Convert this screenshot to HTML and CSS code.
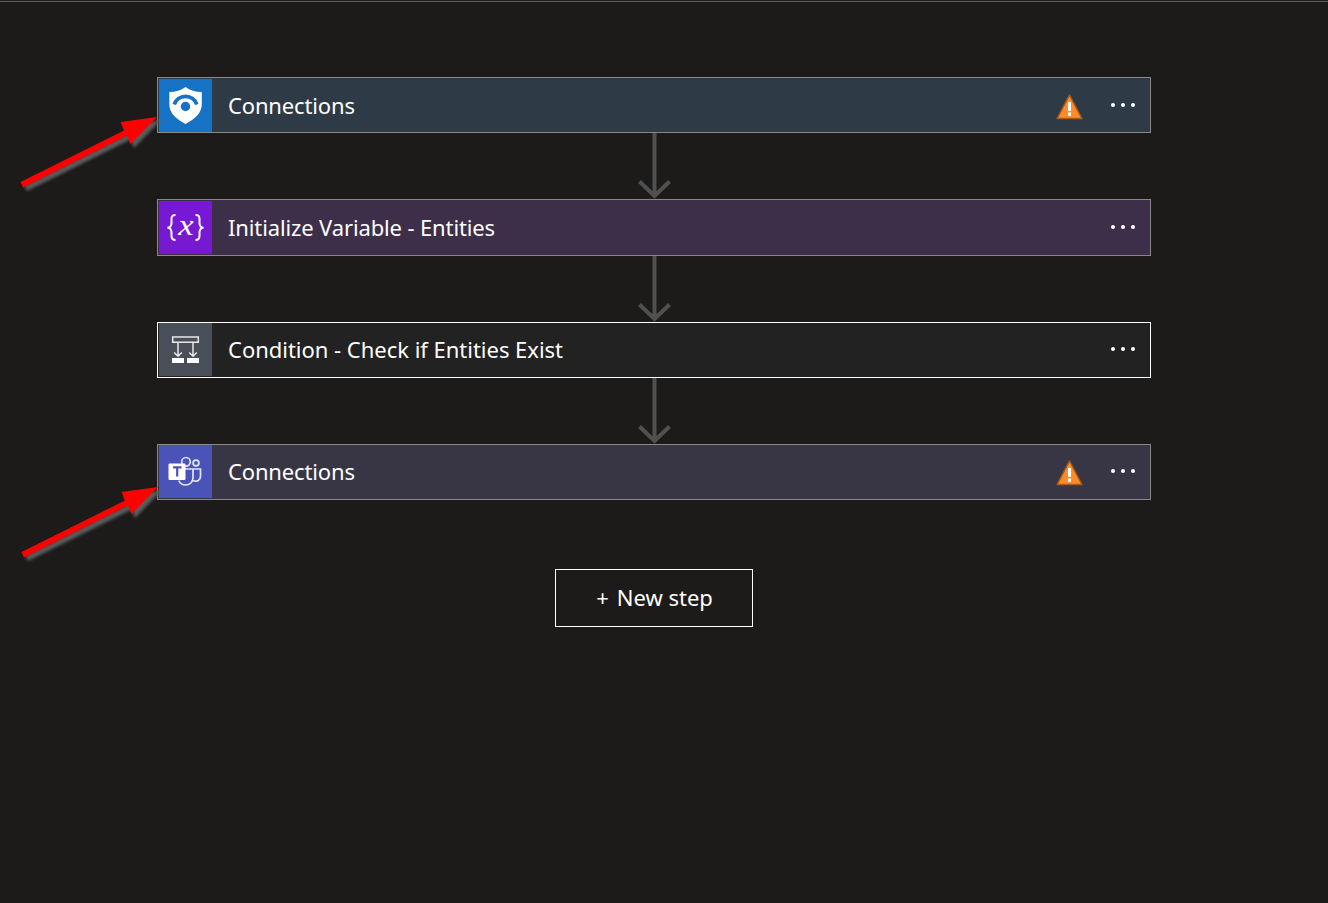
FILE: index.html
```html
<!DOCTYPE html>
<html lang="en">
<head>
<meta charset="utf-8">
<title>Logic app designer</title>
<link rel="stylesheet" href="styles.css">
</head>
<body>
<main class="designer">
  <div class="flow">
    <section class="card sentinel">
      <div class="icon"><svg width="53" height="53" viewBox="0 0 53 53"><path d="M26.500 8C22 11.500 16.500 13 10.300 13V25C10.300 34 17 40 26.500 45C36 40 42.800 34 42.800 25V13C36.500 13 31 11.500 26.500 8Z" fill="#fff"/><path d="M15.200 25.500A11.900 11.900 0 0 1 37.800 25.500" fill="none" stroke="#1672c4" stroke-width="3.800"/><circle cx="26.500" cy="27.500" r="4.700" fill="#1672c4"/></svg></div>
      <span class="title">Connections</span>
      <svg class="warning" width="28" height="28" viewBox="0 0 28 28"><path d="M14.500 2L26.800 25.500H2.200Z" fill="#ff8c28" stroke="#aa5a14" stroke-width="1.500" stroke-linejoin="round"/><path d="M13 9h3v9h-3zM13 19.500h3v3.200h-3z" fill="#fff"/></svg>
      <span class="more"><i></i><i></i><i></i></span>
    </section>
    <div class="link"><svg width="34" height="66" viewBox="0 0 34 66"><path d="M17.500 0V64M2.500 48.500L17.500 63L32.500 48.500" /></svg></div>
    <section class="card variable">
      <div class="icon"><svg width="53" height="53" viewBox="0 0 53 53" fill="none" stroke="#fff" stroke-width="2"><path d="M16.500 14C13 14 12.500 15.500 12.500 18V22C12.500 25 11.500 26.500 8.500 26.700C11.500 27 12.500 28.500 12.500 31.500V35C12.500 38 13.500 39 16.500 39M36.500 14C40 14 40.500 15.500 40.500 18V22C40.500 25 41.500 26.500 44.500 26.700C41.500 27 40.500 28.500 40.500 31.500V35C40.500 38 39.500 39 36.500 39"/><text class="variable-glyph" transform="translate(26.800 33.500) scale(1.150 1)" text-anchor="middle">x</text></svg></div>
      <span class="title">Initialize Variable - Entities</span>
      <span class="more"><i></i><i></i><i></i></span>
    </section>
    <div class="link"><svg width="34" height="66" viewBox="0 0 34 66"><path d="M17.500 0V64M2.500 48.500L17.500 63L32.500 48.500" /></svg></div>
    <section class="card condition">
      <div class="icon"><svg width="53" height="53" viewBox="0 0 53 53" fill="none" stroke="#e8e8e8" stroke-width="1.500"><path d="M13.700 13.900H39.300V19.200H13.700Z"/><path d="M19 19.500V33M15.200 29.500L19 33.300L22.800 29.500M34 19.500V33M30.200 29.500L34 33.300L37.800 29.500"/><path d="M13 35H25V40H13ZM28 35H40V40H28Z" fill="#fff" stroke="none"/></svg></div>
      <span class="title">Condition - Check if Entities Exist</span>
      <span class="more"><i></i><i></i><i></i></span>
    </section>
    <div class="link"><svg width="34" height="66" viewBox="0 0 34 66"><path d="M17.500 0V64M2.500 48.500L17.500 63L32.500 48.500" /></svg></div>
    <section class="card teams">
      <div class="icon"><svg width="53" height="53" viewBox="0 0 53 53" fill="none" stroke="#e4e5f5" stroke-width="1.700"><circle cx="27" cy="16.800" r="4.300"/><circle cx="37" cy="18" r="2.900"/><path d="M26 24H34V33C34 37 30.700 40 26.700 40C23.500 40 21 38.500 19.800 35.500M34 24H41.500V31.500C41.500 35 38 37 34.200 35.700"/><rect x="9.500" y="18.500" width="17" height="16.500" rx="1.200" fill="#fff" stroke="none"/><path d="M14 22.300H22.500M18.200 22.300V31.500" stroke="#4a53b8" stroke-width="2.200"/></svg></div>
      <span class="title">Connections</span>
      <svg class="warning" width="28" height="28" viewBox="0 0 28 28"><path d="M14.500 2L26.800 25.500H2.200Z" fill="#ff8c28" stroke="#aa5a14" stroke-width="1.500" stroke-linejoin="round"/><path d="M13 9h3v9h-3zM13 19.500h3v3.200h-3z" fill="#fff"/></svg>
      <span class="more"><i></i><i></i><i></i></span>
    </section>
    <button class="new-step"><span class="plus">+</span><span>New step</span></button>
  </div>
  <svg class="pointer first" width="150" height="90" viewBox="0 0 150 90"><use href="#pointer-shape"/></svg>
  <svg class="pointer second" width="150" height="90" viewBox="0 0 150 90">
    <defs>
      <g id="pointer-shape">
        <path class="pointer-shadow" d="M0 66L103 14.500L99.500 6L137 0L110 28L106.500 19.500L3 71Z"/>
        <path class="pointer-fill" d="M0.500 65L104 13.500L100.500 5L137 0L110.500 27L107 18.500L3 70.500Z"/>
      </g>
    </defs>
    <use href="#pointer-shape"/>
  </svg>
</main>
</body>
</html>
```

FILE: styles.css
```css
* { box-sizing: border-box; }
body { margin: 0; background: #1c1b1a; }
.designer {
  position: relative;
  height: 903px;
  padding: 76px 177px 0 157px;
  overflow: hidden;
  color: #fff;
  font: 22px/30px "Noto Sans", "Open Sans", sans-serif;
}
.designer::before {
  content: "";
  position: absolute;
  inset: 1px 0 auto;
  height: 1px;
  background: #605e5c;
}
.flow { display: flex; flex-direction: column; align-items: center; padding-top: 1px; }
.card {
  display: flex;
  align-items: center;
  width: 100%;
  height: 56px;
  padding: 0 14px 0 1px;
  border: 1px solid #8a8886;
}
.icon { display: flex; width: 53px; height: 53px; }
.title { flex: 1; padding: 0 0 2px 16px; white-space: nowrap; letter-spacing: -0.15px; }
.sentinel { background: #2e3b46; }
.sentinel .icon { background: #1672c4; margin-top: 1px; }
.sentinel .title { padding-bottom: 0; }
.variable { height: 57px; background: #3d2e49; }
.variable .icon { background: #7719d2; }
.variable .title { letter-spacing: -0.13px; }
.variable-glyph { fill: #fff; stroke: none; font: italic 30px "Liberation Serif", serif; }
.condition { background: #222; border-color: #fff; }
.condition .icon { background: #484f58; margin-bottom: 1px; }
.condition .title { letter-spacing: -0.02px; }
.teams { background: #383645; }
.teams .icon { background: #4a53b8; margin-bottom: 1px; }
.warning { margin-right: 27px; }
.sentinel .warning { margin-top: 4px; }
.teams .warning { margin-top: 2px; }
.more { display: flex; gap: 6px; width: 26px; padding: 0 0 1px 0.5px; }
.condition .more, .teams .more { padding-bottom: 3px; }
.more i { width: 4px; height: 4px; border-radius: 50%; background: #fff; }
.link { display: flex; height: 66px; padding-right: 1px; }
.link path { fill: none; stroke: #505050; stroke-width: 4; }
.new-step {
  display: flex;
  align-items: center;
  justify-content: center;
  gap: 8px;
  width: 198px;
  height: 58px;
  margin-top: 69px;
  padding: 0 0 2px 1px;
  border: 1px solid #fff;
  background: transparent;
  color: inherit;
  font: inherit;
}
.pointer { position: absolute; overflow: visible; }
.first { left: 19.500px; top: 116.500px; }
.second { left: 20.500px; top: 486.500px; }
.pointer-fill { fill: #f00; }
.pointer-shadow { fill: #5c5c5c; transform: translate(4px, 3px); filter: blur(1.500px); }
```
